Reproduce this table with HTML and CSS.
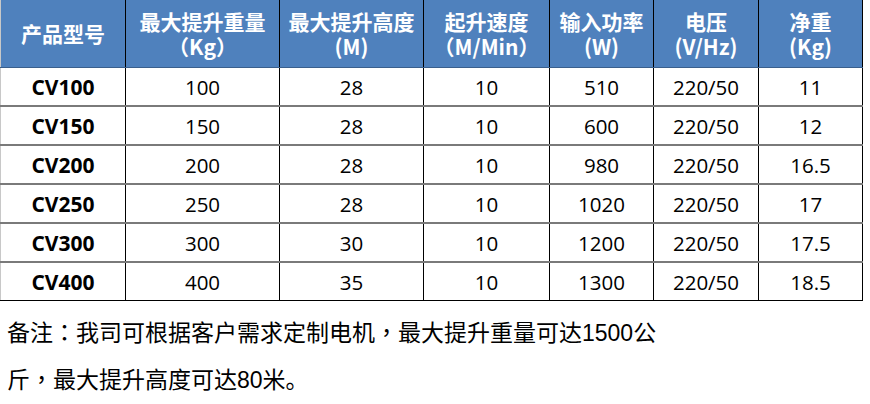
FILE: index.html
```html
<!DOCTYPE html>
<html lang="zh-CN">
<head>
<meta charset="utf-8">
<link rel="stylesheet" href="styles.css">
</head>
<body>
<table class="spec">
  <colgroup>
    <col class="c1"><col class="c2"><col class="c3"><col class="c4"><col class="c5"><col class="c6"><col class="c7">
  </colgroup>
  <thead>
    <tr>
      <th>产品型号</th>
      <th>最大提升重量<br>（Kg）</th>
      <th>最大提升高度<br>(M)</th>
      <th>起升速度<br>（M/Min）</th>
      <th>输入功率<br>(W)</th>
      <th>电压<br>(V/Hz)</th>
      <th>净重<br>(Kg)</th>
    </tr>
  </thead>
  <tbody>
    <tr><td class="model">CV100</td><td>100</td><td>28</td><td>10</td><td>510</td><td>220/50</td><td>11</td></tr>
    <tr><td class="model">CV150</td><td>150</td><td>28</td><td>10</td><td>600</td><td>220/50</td><td>12</td></tr>
    <tr><td class="model">CV200</td><td>200</td><td>28</td><td>10</td><td>980</td><td>220/50</td><td>16.5</td></tr>
    <tr><td class="model">CV250</td><td>250</td><td>28</td><td>10</td><td>1020</td><td>220/50</td><td>17</td></tr>
    <tr><td class="model">CV300</td><td>300</td><td>30</td><td>10</td><td>1200</td><td>220/50</td><td>17.5</td></tr>
    <tr><td class="model">CV400</td><td>400</td><td>35</td><td>10</td><td>1300</td><td>220/50</td><td>18.5</td></tr>
  </tbody>
</table>
<p class="note">备注<span class="punct" lang="zh-TW">：</span>我司可根据客户需求定制电机<span class="punct" lang="zh-TW">，</span>最大提升重量可达1500公斤<span class="punct" lang="zh-TW">，</span>最大提升高度可达80米。</p>
</body>
</html>
```
FILE: styles.css
```css
html, body {
  margin: 0;
  padding: 0;
  background: #ffffff;
}
.spec {
  border-collapse: collapse;
  table-layout: fixed;
  width: 862px;
  font-family: "Open Sans", "Noto Sans CJK SC", sans-serif;
}
.c1 { width: 125px; }
.c2 { width: 154px; }
.c3 { width: 144px; }
.c4 { width: 126px; }
.c5 { width: 104px; }
.c6 { width: 105px; }
.c7 { width: 104px; }
.spec th {
  background: #4f81bd;
  color: #ffffff;
  font-family: "Noto Sans CJK SC", sans-serif;
  font-weight: 700;
  font-size: 21px;
  line-height: 25px;
  height: 67px;
  padding: 0;
  text-align: center;
  vertical-align: middle;
  border-left: 1px solid #000000;
  border-bottom: 1px solid #3a5f8c;
}
.spec th:first-child { border-left: 1px solid #c8c8c8; }
.spec th:last-child { border-right: 1px solid #000000; }
.spec td {
  height: 37px;
  padding: 0;
  text-align: center;
  vertical-align: middle;
  font-size: 20.5px;
  color: #000000;
  border-left: 1px solid #000000;
  border-bottom: 2px solid #7a7a7a;
}
.spec td:first-child { border-left: 1px solid #c8c8c8; }
.spec td:last-child { border-right: 1px solid #000000; }
.spec tbody tr:last-child td { border-bottom: 1px solid #000000; }
.spec td.model {
  font-weight: 700;
  font-size: 21px;
}
.note {
  margin: 8px 0 0 0;
  padding: 0 0 0 7px;
  width: 660px;
  font-family: "Liberation Sans", "Noto Sans CJK SC", sans-serif;
  font-size: 23px;
  line-height: 45px;
  color: #000000;
}
.punct {
  font-family: "Noto Sans CJK TC", sans-serif;
}
```
